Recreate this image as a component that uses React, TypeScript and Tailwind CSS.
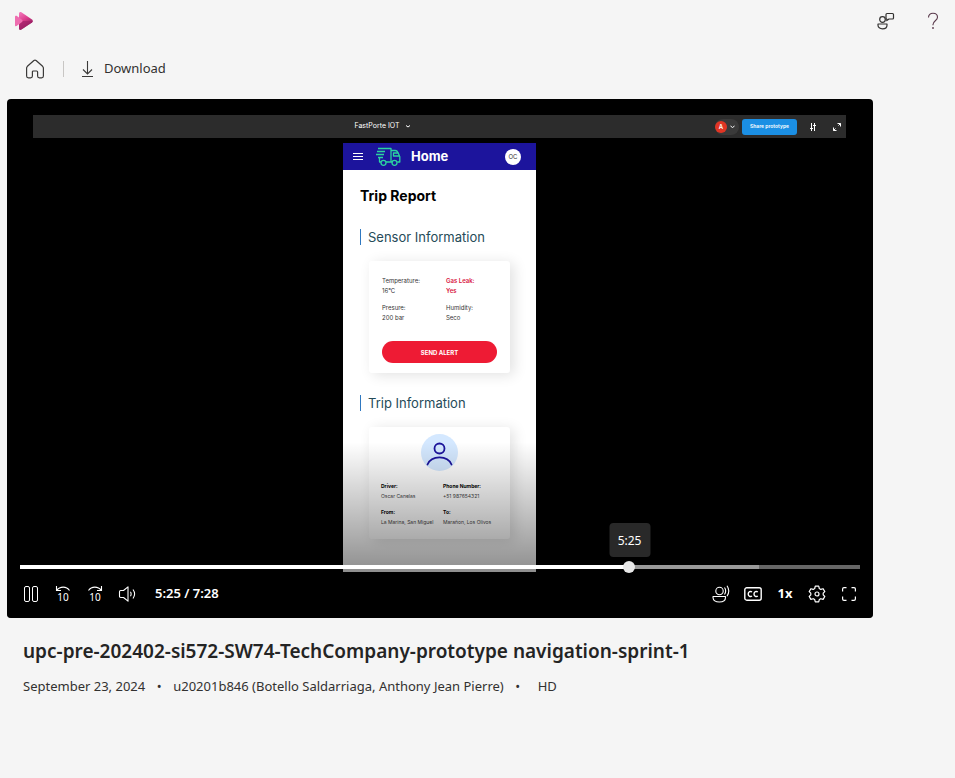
import { useState } from "react";
import type { ReactNode } from "react";

const DURATION = 448;

function IconButton({ label, children }: { label: string; children: ReactNode }) {
  return (
    <button type="button" aria-label={label} className="flex h-8 w-8 items-center justify-center text-white">
      {children}
    </button>
  );
}

function StreamLogo() {
  return (
    <svg width="20" height="20" viewBox="0 0 20 20" aria-hidden="true">
      <defs>
        <linearGradient id="play" x1="0" y1="0" x2="0.5" y2="1">
          <stop offset="0" stopColor="#f47fc0" />
          <stop offset="0.5" stopColor="#dc3c8c" />
          <stop offset="1" stopColor="#7c1650" />
        </linearGradient>
      </defs>
      <path d="M5 2.400C5 1.100 6.300.600 7.400 1.200L18 8.600c1 .7 1 2 0 2.800L7.400 18.600C6.300 19.300 5 18.800 5 17.500z" fill="url(#play)" />
      <path d="M7 10h12c0 .6-.3 1-1 1.500L7.400 18.600C6.300 19.300 5 18.800 5 17.500V14z" fill="#a3206a" opacity="0.7" />
      <path d="M1 5.800c0-1 .8-1.400 1.600-1L8 8.800c.8.6.8 1.500 0 2.200l-5.400 4.100c-.8.4-1.600 0-1.600-.9z" fill="#ee6db0" />
    </svg>
  );
}

function HomeIcon() {
  return (
    <svg width="20" height="20" viewBox="0 0 20 20" fill="none" stroke="#3b3a39" strokeWidth="1.200" strokeLinejoin="round" aria-hidden="true">
      <path d="M8.900 1.500a1.700 1.700 0 0 1 2.200 0l6.500 5.800c.5.500.8 1.100.8 1.800v8a1.800 1.800 0 0 1-1.800 1.800h-2.200a1.800 1.800 0 0 1-1.800-1.800v-4.200a.9.900 0 0 0-.9-.9H8.300a.9.900 0 0 0-.9.900v4.200a1.800 1.800 0 0 1-1.800 1.800H3.400a1.800 1.800 0 0 1-1.800-1.800v-8c0-.7.3-1.300.8-1.800z" />
    </svg>
  );
}

function DownloadIcon() {
  return (
    <svg width="14" height="18" viewBox="0 0 14 18" fill="none" stroke="#3b3a39" strokeWidth="1.100" aria-hidden="true">
      <path d="M6.500 1v13M2 9.500 6.500 14 11 9.500M1 16.500h11" />
    </svg>
  );
}

function FeedbackIcon() {
  return (
    <svg width="18" height="18" viewBox="0 0 18 18" fill="none" stroke="#323130" strokeWidth="1.200" strokeLinejoin="round" aria-hidden="true">
      <circle cx="5.500" cy="7.500" r="2.800" />
      <path d="M1 12h9v1.200c0 2.200-1.900 3.600-4.500 3.600S1 15.400 1 13.200z" />
      <path d="M9 2.500c0-.6.400-1 1-1h5.500c.6 0 1 .4 1 1v3.500c0 .6-.4 1-1 1H12L9.800 8.600V7C9.300 7 9 6.600 9 6z" />
    </svg>
  );
}

function HelpIcon() {
  return (
    <svg width="12" height="18" viewBox="0 0 12 18" fill="none" stroke="#5a3a4c" strokeWidth="1.100" aria-hidden="true">
      <path d="M1.500 5.500C1.500 2.800 3.300 1.200 6 1.200s4.500 1.600 4.500 4c0 3.400-4.500 3.800-4.500 7.400v.6" />
      <circle cx="6" cy="16" r="0.900" fill="#5a3a4c" stroke="none" />
    </svg>
  );
}

function PauseIcon() {
  return (
    <svg width="16" height="18" viewBox="0 0 16 18" fill="none" stroke="currentColor" aria-hidden="true">
      <rect x="1.500" y="1.500" width="5" height="15" rx="1.500" />
      <rect x="9.500" y="1.500" width="5" height="15" rx="1.500" />
    </svg>
  );
}

function SkipIcon({ forward = false }: { forward?: boolean }) {
  return (
    <span className="flex flex-col items-center">
      <svg width="16" height="6" viewBox="0 0 16 6" fill="none" stroke="currentColor" strokeWidth="1.100" className="overflow-visible" aria-hidden="true">
        {forward ? <path d="M14.500 0v4.500H10M1.500 4.500C4.500 0 11 0 14.500 4.500" /> : <path d="M1.500 0v4.500H6M14.500 4.500C11.500 0 5 0 1.500 4.500" />}
      </svg>
      <span className="text-[10px] leading-[10px]">10</span>
    </span>
  );
}

function VolumeIcon() {
  return (
    <svg width="18" height="18" viewBox="0 0 18 18" fill="none" stroke="currentColor" strokeWidth="1.100" strokeLinejoin="round" aria-hidden="true">
      <path d="M10 1.800v14.400L5.500 12.500H2.700c-.7 0-1.200-.5-1.200-1.200V6.700c0-.7.5-1.200 1.200-1.200h2.800z" />
      <path d="M12.500 6.800c.8 1.400.8 3 0 4.400M15 4.500c2 2.800 2 6.200 0 9" />
    </svg>
  );
}

function VoiceIcon() {
  return (
    <svg width="18" height="18" viewBox="0 0 18 18" fill="none" stroke="currentColor" strokeWidth="1.100" strokeLinejoin="round" aria-hidden="true">
      <circle cx="7.500" cy="6" r="3.700" />
      <path d="M1 11.500h12.500v1c0 3-2.500 4.500-6.200 4.500S1 15.500 1 12.500z" />
      <path d="M12.500 2.500c1.400 2 1.400 4.800 0 7M15 .800c2.200 3.200 2.200 7.200 0 10.400" />
    </svg>
  );
}

function CaptionIcon() {
  return (
    <svg width="18" height="14" viewBox="0 0 18 14" fill="none" stroke="currentColor" strokeWidth="1.400" aria-hidden="true">
      <rect x="0.800" y="0.800" width="16.400" height="12.400" rx="2" />
      <path d="M8 5C6.500 3.800 4.200 4.700 4.200 7S6.500 10.200 8 9M13.800 5c-1.500-1.200-3.800-.3-3.800 2s2.300 3.200 3.800 2" />
    </svg>
  );
}

function GearIcon() {
  return (
    <svg width="18" height="18" viewBox="0 0 18 18" fill="none" stroke="currentColor" strokeWidth="1.200" strokeLinejoin="round" aria-hidden="true">
      <path d="M7.300 1.200h3.400l.6 2.300 1.500.9 2.300-.7 1.700 2.900L15.200 8.200v1.700l1.600 1.600-1.700 2.900-2.300-.7-1.500.9-.6 2.300H7.300l-.6-2.300-1.500-.9-2.300.7-1.700-2.900L2.800 9.900V8.200L1.200 6.600l1.700-2.900 2.300.7 1.500-.9z" />
      <circle cx="9" cy="9" r="2" />
    </svg>
  );
}

function FullscreenIcon() {
  return (
    <svg width="14" height="14" viewBox="0 0 14 14" fill="none" stroke="currentColor" strokeWidth="1.200" aria-hidden="true">
      <path d="M.600 4.500V2C.600 1.200 1.200.600 2 .600h2.500M9.500.600H12c.8 0 1.400.6 1.400 1.400v2.500M13.400 9.500V12c0 .8-.6 1.400-1.400 1.400H9.500M4.500 13.400H2c-.8 0-1.400-.6-1.400-1.400V9.500" />
    </svg>
  );
}

function TruckIcon() {
  return (
    <svg width="26" height="20" viewBox="0 0 26 20" fill="none" stroke="#2bd3a0" strokeWidth="1.300" strokeLinejoin="round" aria-hidden="true">
      <path d="M3 1.500h13v13.500h-4.500M16 3.500h4.200c1.400 0 2.200.8 2.800 2l1.800 4.200V15h-2.500M24.500 9h-6V6h4.500M2 4.500h8M1 7.500h8M3 10.500h5M4.500 11v4H6M17.500 15H11" />
      <circle cx="8.500" cy="15.800" r="2.500" />
      <circle cx="19.500" cy="15.800" r="2.500" />
    </svg>
  );
}

function Field({ label, value, className }: { label: string; value: string; className?: string }) {
  return (
    <div className={className}>
      <dt>{label}</dt>
      <dd>{value}</dd>
    </div>
  );
}

function SectionTitle({ children }: { children: ReactNode }) {
  return (
    <h3 className="ml-[17px] h-4 border-l border-l-[#2f78c0] pl-[7px] text-[13px] leading-4 text-[#254b58]">{children}</h3>
  );
}

function PhoneScreen() {
  return (
    <div className="mx-auto mt-[5px] h-[429px] w-[193px] overflow-hidden bg-white font-['Inter',sans-serif]">
      <div className="flex h-[27px] items-center bg-[#1c149c] pr-[15px] pl-[10px] text-white">
        <svg width="10" height="7" viewBox="0 0 10 7" stroke="currentColor" aria-hidden="true">
          <path d="M0 .500h10M0 3.500h10M0 6.500h10" />
        </svg>
        <span className="ml-3">
          <TruckIcon />
        </span>
        <span className="ml-[10px] text-[13px] font-bold">Home</span>
        <span className="ml-auto flex h-4 w-4 items-center justify-center rounded-full bg-white text-[6px] text-[#333]">OC</span>
      </div>
      <h2 className="mt-4 pl-[17px] text-sm leading-5 font-bold text-black">Trip Report</h2>
      <div className="mt-[23px]">
        <SectionTitle>Sensor Information</SectionTitle>
      </div>
      <div className="mx-[26px] mt-4 h-28 rounded-[3px] bg-white px-[13px] pt-[15px] shadow-[4px_2px_14px_rgba(0,0,0,0.12)]">
        <dl className="grid grid-cols-[64px_1fr] gap-y-[7px] text-[6px] leading-[10px] text-[#333]">
          <Field label="Temperature:" value="16°C" />
          <Field label="Gas Leak:" value="Yes" className="font-semibold text-[#d8123c]" />
          <Field label="Presure:" value="200 bar" />
          <Field label="Humidity:" value="Seco" />
        </dl>
        <button type="button" className="mt-[18px] block h-[22px] w-full rounded-full bg-[#ee1b34] text-[6px] font-bold text-white">
          SEND ALERT
        </button>
      </div>
      <div className="mt-[22px]">
        <SectionTitle>Trip Information</SectionTitle>
      </div>
      <div className="mx-[26px] mt-4 h-28 rounded-[3px] bg-white px-3 pt-[7px] shadow-[4px_2px_14px_rgba(0,0,0,0.12)]">
        <svg width="37" height="37" viewBox="0 0 37 37" fill="none" stroke="#1c149c" strokeWidth="1.800" strokeLinecap="round" className="mx-auto" aria-hidden="true">
          <circle cx="18.500" cy="18.500" r="18.500" fill="#d4e8ff" stroke="none" />
          <circle cx="18.500" cy="14.500" r="5" />
          <path d="M6.500 30.500c4-9.500 20-9.500 24 0" />
        </svg>
        <dl className="mt-[10px] grid grid-cols-[62px_1fr] gap-y-[6px] text-[5px] leading-[10px] whitespace-nowrap text-[#444] [&_dt]:font-bold [&_dt]:text-black">
          <Field label="Driver:" value="Oscar Canelas" />
          <Field label="Phone Number:" value="+51 987654321" />
          <Field label="From:" value="La Marina, San Miguel" />
          <Field label="To:" value="Marañon, Los Olivos" />
        </dl>
      </div>
    </div>
  );
}

function PrototypeBar() {
  return (
    <div className="flex h-[23px] items-center bg-[#2c2c2c] pr-[5px] font-['Inter',sans-serif] text-white">
      <div className="flex flex-1 items-center justify-center gap-[6px] pl-4 text-[7px]">
        <span>FastPorte IOT</span>
        <svg width="4" height="3" viewBox="0 0 4 3" fill="none" stroke="currentColor" aria-hidden="true">
          <path d="M0 .500 2 2 4 .500" />
        </svg>
      </div>
      <div className="flex h-4 w-6 items-center gap-[3px] rounded-full bg-[#3a3a3a]">
        <span className="flex h-3 w-3 items-center justify-center rounded-full bg-[#e03524] text-[6px] font-semibold">A</span>
        <svg width="5" height="4" viewBox="0 0 5 4" fill="none" stroke="currentColor" aria-hidden="true">
          <path d="M.500 1l2 1.500 2-1.500" />
        </svg>
      </div>
      <button type="button" className="ml-[3px] h-4 w-[55px] rounded-[3px] bg-[#1b8fe4] text-[5px] font-semibold whitespace-nowrap">
        Share prototype
      </button>
      <svg width="8" height="8" viewBox="0 0 8 8" fill="none" stroke="currentColor" className="ml-3" aria-hidden="true">
        <path d="M2.500 0v8M5.500 0v8M1 5.500h3M4 2.500h3" />
      </svg>
      <svg width="8" height="8" viewBox="0 0 8 8" fill="none" stroke="currentColor" className="ml-4" aria-hidden="true">
        <path d="M4.500.500h3v3M7.500.500l-2 2M.500 4.500v3h3M.500 7.500l2-2" />
      </svg>
    </div>
  );
}

function Player() {
  const [time, setTime] = useState(326);
  const played = (time / DURATION) * 100;
  return (
    <section aria-label="Video player" className="relative mr-[82px] ml-[7px] overflow-hidden rounded bg-black pt-4 pr-[27px] pb-[46px] pl-[26px]">
      <PrototypeBar />
      <PhoneScreen />
      <div className="absolute inset-x-0 bottom-0 flex h-44 flex-col justify-end bg-linear-to-b from-transparent to-black/60 pb-2">
        <div className="relative mx-[13px] mb-[5px] flex h-3 items-center">
          <div className="flex h-1 w-full bg-[#666]">
            <div className="bg-white" style={{ width: `${played}%` }} />
            <div className="bg-[#999]" style={{ width: `${Math.max(0, 88 - played)}%` }} />
          </div>
          <input
            type="range"
            aria-label="Seek"
            min={0}
            max={DURATION}
            value={time}
            onChange={(e) => setTime(Number(e.target.value))}
            className="absolute inset-0 h-3 w-full appearance-none bg-transparent [&::-webkit-slider-thumb]:h-3 [&::-webkit-slider-thumb]:w-3 [&::-webkit-slider-thumb]:appearance-none [&::-webkit-slider-thumb]:rounded-full [&::-webkit-slider-thumb]:bg-[#e8e8e8]"
          />
          <div
            className="absolute bottom-4 flex h-[34px] w-[41px] -translate-x-1/2 items-center justify-center rounded bg-[#292929] pt-px text-xs text-white"
            style={{ left: `${played - 0.2}%` }}
          >
            5:25
          </div>
        </div>
        <div className="flex items-center px-2">
          <IconButton label="Pause"><PauseIcon /></IconButton>
          <IconButton label="Back 10 seconds"><SkipIcon /></IconButton>
          <IconButton label="Forward 10 seconds"><SkipIcon forward /></IconButton>
          <IconButton label="Volume"><VolumeIcon /></IconButton>
          <span className="ml-3 text-[13px] font-semibold text-white">5:25 / 7:28</span>
          <div className="ml-auto flex items-center">
            <IconButton label="Noise suppression"><VoiceIcon /></IconButton>
            <IconButton label="Captions"><CaptionIcon /></IconButton>
            <IconButton label="Playback speed"><span className="text-[13px] font-bold">1x</span></IconButton>
            <IconButton label="Settings"><GearIcon /></IconButton>
            <IconButton label="Full screen"><FullscreenIcon /></IconButton>
          </div>
        </div>
      </div>
    </section>
  );
}

export default function App() {
  return (
    <div className="min-h-screen bg-[#f5f5f5] font-['Segoe_UI','Noto_Sans',sans-serif] text-[#323130]">
      <header className="flex h-[42px] items-center pr-4 pl-[14px]">
        <a href="#" aria-label="Stream"><StreamLogo /></a>
        <button type="button" aria-label="Feedback" className="ml-auto"><FeedbackIcon /></button>
        <button type="button" aria-label="Help" className="ml-8"><HelpIcon /></button>
      </header>
      <nav className="flex h-[57px] items-center pb-[3px] pl-[25px]">
        <a href="#" aria-label="Home"><HomeIcon /></a>
        <span className="ml-[18px] h-4 w-px bg-[#c8c6c4]" />
        <button type="button" className="ml-[17px] flex items-center gap-[9px] text-[13px]">
          <DownloadIcon />
          Download
        </button>
      </nav>
      <main>
        <Player />
        <div className="px-[23px] pt-[19px]">
          <h1 className="text-[19px] leading-7 font-semibold text-[#242424]">
            upc-pre-202402-si572-SW74-TechCompany-prototype navigation-sprint-1
          </h1>
          <div className="mt-[11px] flex items-center text-[13px] leading-5">
            <span>September 23, 2024</span>
            <span className="w-7 text-center">•</span>
            <span>u20201b846 (Botello Saldarriaga, Anthony Jean Pierre)</span>
            <span className="w-7 text-center">•</span>
            <span className="ml-[6px]">HD</span>
          </div>
        </div>
      </main>
    </div>
  );
}
